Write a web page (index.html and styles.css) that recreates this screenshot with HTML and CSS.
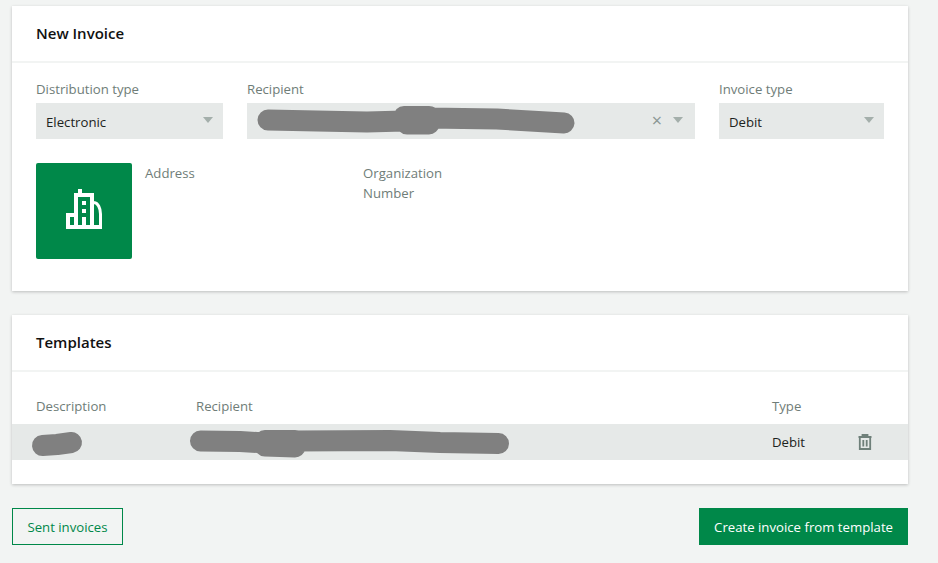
FILE: index.html
```html
<!DOCTYPE html>
<html lang="en">
<head>
<meta charset="utf-8">
<title>New Invoice</title>
<link rel="stylesheet" href="styles.css">
</head>
<body>
<main class="page">
  <section class="card card-invoice">
    <h2 class="card-title">New Invoice</h2>
    <div class="card-body">
      <div class="fields">
        <div class="field">
          <label class="label">Distribution type</label>
          <div class="select"><span class="value">Electronic</span><span class="caret"></span></div>
        </div>
        <div class="field">
          <label class="label">Recipient</label>
          <div class="select select-clearable">
            <svg class="blob blob-select" viewBox="0 0 318 32" aria-hidden="true"><path class="blob-line" d="M11 15 L60 16 L110 17 L147 16 L172 19 L150 19 L172 11.500 L147 11.500 L172 13 L240 14 L290 17 L307 18"/></svg>
            <span class="clear">×</span><span class="caret"></span>
          </div>
        </div>
        <div class="field">
          <label class="label">Invoice type</label>
          <div class="select"><span class="value">Debit</span><span class="caret"></span></div>
        </div>
      </div>
      <div class="party">
        <div class="avatar">
          <svg class="building" viewBox="0 0 36 40" aria-hidden="true">
            <path class="building-fill" d="M12 0h4v4h12v36h-28v-16h8v-20h4zM12 8v28h4v-8h4v8h4v-28zM4 28v8h4v-8zM16 12h4v4h-4zM16 20h4v4h-4z" fill-rule="evenodd"/>
            <path class="building-curve" d="M28 13.500 C32 14 34.500 19 34.500 25 V38"/>
            <rect class="building-fill" x="28" y="36" width="8" height="4"/>
          </svg>
        </div>
        <div class="party-col party-address">Address</div>
        <div class="party-col">Organization<br>Number</div>
      </div>
    </div>
  </section>

  <section class="card card-templates">
    <h2 class="card-title">Templates</h2>
    <div class="table">
      <div class="tr th">
        <div>Description</div>
        <div>Recipient</div>
        <div>Type</div>
        <div></div>
      </div>
      <div class="tr td">
        <div><svg class="blob blob-desc" viewBox="0 0 50 24" aria-hidden="true"><path class="blob-line" d="M10.500 15.500 L25 14.500 L39.500 12.500"/></svg></div>
        <div><svg class="blob blob-row" viewBox="0 0 320 28" aria-hidden="true"><path class="blob-line" d="M10.500 13 L50 13.500 L75 15 L105 19 L75 18 L105 12.500 L75 12.500 L105 13 L200 12.500 L250 14.500 L308.500 15.500"/></svg></div>
        <div class="type">Debit</div>
        <div class="trash-cell">
          <svg class="trash" viewBox="0 0 14 16" aria-hidden="true">
            <path class="trash-line" d="M0.500 3H13.500M4.500 3V1H9.500V3M1.800 3V15H12.200V3M5.300 6V12.500M8.700 6V12.500"/>
          </svg>
        </div>
      </div>
    </div>
  </section>

  <div class="actions">
    <button class="btn btn-outline">Sent invoices</button>
    <button class="btn btn-solid">Create invoice from template</button>
  </div>
</main>
</body>
</html>
```

FILE: styles.css
```css
* { box-sizing: border-box; }

html, body { margin: 0; padding: 0; }

body {
  background: #f2f4f3;
  color: #1c2320;
  font-family: "Open Sans", "Noto Sans", sans-serif;
  font-size: 13.200px;
  height: 563px;
  overflow: hidden;
}

.page {
  width: 896px;
  margin-left: 12px;
  padding-top: 6px;
  display: flex;
  flex-direction: column;
}

.card {
  background: #fff;
  box-shadow: 0 1px 3px rgba(0, 0, 0, 0.22);
}

.card-invoice { height: 285px; }

.card-templates { height: 169px; margin-top: 24px; }

.card-title {
  margin: 0;
  height: 57px;
  padding: 0 24px 2px;
  display: flex;
  align-items: center;
  border-bottom: 2px solid #f2f4f3;
  font-size: 15px;
  font-weight: 600;
  color: #111;
}

.card-body { padding: 16px 24px 0; }

.fields {
  display: grid;
  grid-template-columns: 187px 448px 165px;
  gap: 24px;
}

.label {
  display: block;
  height: 24px;
  line-height: 20px;
  color: #6f7d78;
}

.select {
  height: 36px;
  padding: 0 10px;
  background: #e6e9e8;
  display: flex;
  align-items: center;
}

.select-clearable { padding-right: 12px; }

.value { flex: 1; padding-top: 2px; }

.caret {
  width: 0;
  height: 0;
  margin-bottom: 2px;
  border-left: 5px solid transparent;
  border-right: 5px solid transparent;
  border-top: 6px solid #a4afab;
}

.clear {
  margin: 0 11px 2px auto;
  color: #8b9793;
  font-size: 18px;
  line-height: 1;
}

.blob { display: block; overflow: visible; }

.blob-line {
  fill: none;
  stroke: #808080;
  stroke-width: 21;
  stroke-linecap: round;
  stroke-linejoin: round;
}

.blob-select { width: 318px; height: 32px; }

.blob-desc { width: 50px; height: 24px; margin-left: -4px; }

.blob-row { width: 320px; height: 28px; margin-left: -6px; }

.party {
  display: flex;
  margin-top: 24px;
  color: #6f7d78;
  line-height: 20px;
}

.avatar {
  width: 96px;
  height: 96px;
  border-radius: 2px;
  background: #008849;
  display: flex;
  align-items: center;
  justify-content: center;
}

.building { width: 36px; height: 40px; margin-bottom: 4px; }

.building-fill { fill: #fff; }

.building-curve { fill: none; stroke: #fff; stroke-width: 3; }

.party-address { width: 218px; margin-left: 13px; }

.table { padding-top: 24px; }

.tr {
  display: grid;
  grid-template-columns: 160px 576px 86px 1fr;
  padding-left: 24px;
  align-items: center;
}

.th { height: 28px; align-items: start; line-height: 20px; color: #6f7d78; }

.td { height: 36px; background: #e6e9e8; }

.trash-cell { display: flex; }

.trash { width: 14px; height: 16px; display: block; }

.trash-line { fill: none; stroke: #6f807a; stroke-width: 1.800; }

.actions {
  display: flex;
  justify-content: space-between;
  margin-top: 24px;
}

.btn {
  height: 37px;
  padding: 0 14px;
  font-family: inherit;
  font-size: 13.200px;
  border: 1px solid #008849;
}

.btn-outline { width: 111px; padding: 0; background: transparent; color: #008849; }

.btn-solid { background: #008849; color: #fff; }
```
